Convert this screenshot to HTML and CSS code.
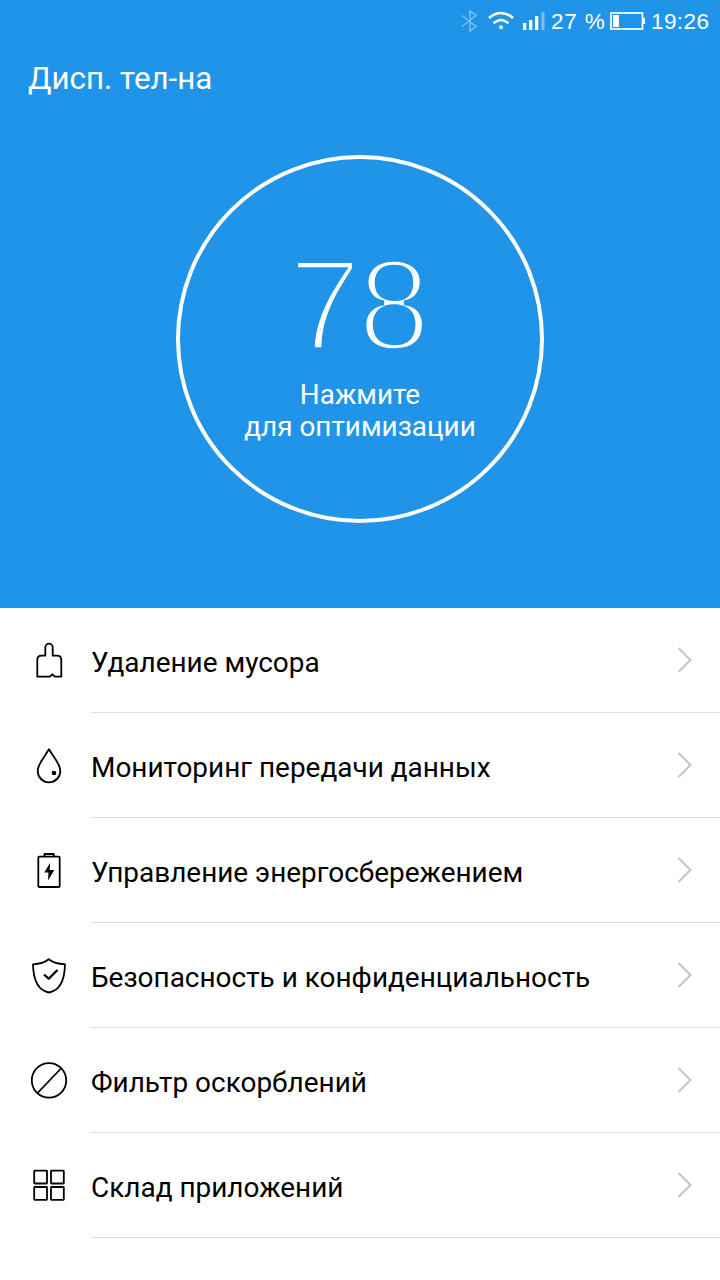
FILE: index.html
```html
<!DOCTYPE html>
<html lang="ru">
<head>
<meta charset="utf-8">
<title>Дисп. тел-на</title>
<link rel="stylesheet" href="styles.css">
</head>
<body>
<header class="hero">
  <div class="status">
    <svg class="status-icons" width="100" height="44" viewBox="0 0 100 44" fill="none">
      <path d="M12 15.500L26 26.500L20 31V11L26 15.500L12 26.500" stroke="#fff" stroke-opacity=".4" stroke-width="1.500"/>
      <g stroke="#fff" stroke-width="2.600"><path d="M39 18q12-10 24 0M43.500 23.200q7.500-6.400 15 0"/></g>
      <circle cx="51" cy="27.300" r="2" fill="#fff"/>
      <path d="M73 23h3.300v7h-3.300zM79 20h3.300v10h-3.300zM85 16h3.300v14h-3.300z" fill="#fff"/>
      <path d="M91.500 12h3v18h-3z" fill="#fff" fill-opacity=".4"/>
    </svg>
    <span class="charge">27 %</span>
    <svg class="battery" width="36" height="20" viewBox="0 0 36 20" fill="none">
      <rect x="1" y="1" width="31.500" height="16" stroke="#fff" stroke-width="1.700"/>
      <path d="M3 3h6v12H3zM33 6h2v6h-2z" fill="#fff"/>
    </svg>
    <span class="clock">19:26</span>
  </div>
  <h1 class="title">Дисп. тел-на</h1>
  <button class="dial">
    <span class="score">78</span>
    <span class="hint">Нажмите<br>для оптимизации</span>
  </button>
</header>
<main class="menu">
  <a class="row">
    <svg class="icon" viewBox="0 0 60 60"><path d="M17.300 46.700V30q0-4.300 4.300-4.300h3.700V17.400a3.700 3.700 0 0 1 7.400 0V25.700h4.300q4.300 0 4.300 4.300V46.700H35L32.300 44.300L29.800 46.700Z"/></svg>
    <span class="label"><span class="text">Удаление мусора</span><svg class="chevron" viewBox="0 0 16 26"><path d="M1.500 1L13.500 13L1.500 25"/></svg></span>
  </a>
  <a class="row">
    <svg class="icon" viewBox="0 0 60 60"><path d="M29 14.300C25 21 17.700 29 17.700 36a11.300 11.300 0 0 0 22.600 0C40.300 29 33 21 29 14.300Z"/><circle class="solid" cx="34" cy="38" r="2.300"/></svg>
    <span class="label"><span class="text">Мониторинг передачи данных</span><svg class="chevron" viewBox="0 0 16 26"><path d="M1.500 1L13.500 13L1.500 25"/></svg></span>
  </a>
  <a class="row">
    <svg class="icon" viewBox="0 0 60 60"><rect x="18.300" y="16.600" width="21.400" height="30.400" rx="1"/><path d="M24.500 16.500V14h9.300V16.500"/><path class="solid" d="M30 23L24.300 32.500H28.500L28 40.500L34.300 30H29.700Z"/></svg>
    <span class="label"><span class="text">Управление энергосбережением</span><svg class="chevron" viewBox="0 0 16 26"><path d="M1.500 1L13.500 13L1.500 25"/></svg></span>
  </a>
  <a class="row">
    <svg class="icon" viewBox="0 0 60 60"><path d="M28.700 14.300Q23 18.900 13 19.300C13.300 33 17.500 45.500 29 47.500C40.500 45.500 44.700 33 45 19.300Q34.500 18.900 28.700 14.300Z"/><path class="tick" d="M24 29.500L28.700 33.700L37.500 25"/></svg>
    <span class="label"><span class="text">Безопасность и конфиденциальность</span><svg class="chevron" viewBox="0 0 16 26"><path d="M1.500 1L13.500 13L1.500 25"/></svg></span>
  </a>
  <a class="row">
    <svg class="icon" viewBox="0 0 60 60"><circle cx="29" cy="30.400" r="17.200"/><path d="M17.500 43L41 18.500"/></svg>
    <span class="label"><span class="text">Фильтр оскорблений</span><svg class="chevron" viewBox="0 0 16 26"><path d="M1.500 1L13.500 13L1.500 25"/></svg></span>
  </a>
  <a class="row">
    <svg class="icon" viewBox="0 0 60 60"><rect x="14.200" y="15.700" width="12.800" height="12.800" rx=".5"/><rect x="31" y="15.700" width="12.800" height="12.800" rx=".5"/><rect x="14.200" y="32" width="12.800" height="12.800" rx=".5"/><rect x="31" y="32" width="12.800" height="12.800" rx=".5"/></svg>
    <span class="label"><span class="text">Склад приложений</span><svg class="chevron" viewBox="0 0 16 26"><path d="M1.500 1L13.500 13L1.500 25"/></svg></span>
  </a>
</main>
</body>
</html>
```
FILE: styles.css
```css
* { box-sizing: border-box; }
body {
  margin: 0;
  width: 720px;
  height: 1280px;
  overflow: hidden;
  background: #fff;
  color: #000;
  font-family: Roboto, "Noto Sans", sans-serif;
}
.hero {
  height: 608px;
  background: #1f94e9;
  color: #fff;
}
.status {
  display: flex;
  align-items: center;
  height: 44px;
  padding-left: 450px;
  font: 22.5px/44px "Liberation Sans", Arial, sans-serif;
  white-space: pre;
}
.charge {
  width: 60px;
  padding-left: 1px;
  letter-spacing: .8px;
}
.battery { flex: none; }
.status-icons { flex: none; }
.clock {
  padding-left: 5px;
  letter-spacing: .4px;
}
.title {
  margin: 15px 0 0 28px;
  height: 40px;
  font-size: 31.3px;
  font-weight: 400;
  line-height: 40px;
}
.dial {
  display: flex;
  flex-direction: column;
  justify-content: flex-start;
  align-items: center;
  width: 368px;
  height: 368px;
  margin: 56px auto 0;
  padding: 78px 0 0;
  border: 4px solid #fff;
  border-radius: 50%;
  background: none;
  color: inherit;
  font-family: inherit;
  text-align: center;
}
/* The background-coloured outline thins the numerals. */
.score {
  height: 142px;
  margin-left: -4px;
  font: 130px/136px "Liberation Sans", Arial, sans-serif;
  letter-spacing: -3px;
  -webkit-text-stroke: 5.4px #1f94e9;
}
.hint {
  font-size: 27.9px;
  line-height: 32px;
}
.row {
  display: flex;
  height: 105px;
}
.icon {
  flex: none;
  width: 60px;
  height: 60px;
  margin: 22px 11px 0 20px;
  fill: none;
  stroke: #000;
  stroke-width: 1.8;
  stroke-linejoin: round;
}
.icon .solid { fill: #000; stroke: none; }
.icon .tick { stroke-width: 2.3; }
.label {
  flex: 1;
  display: flex;
  align-items: center;
  justify-content: space-between;
  padding-right: 27px;
  border-bottom: 1px solid #dedede;
}
.text {
  padding-top: 5px;
  font-size: 27.95px;
  line-height: 32px;
  white-space: nowrap;
}
.chevron {
  width: 16px;
  height: 26px;
  fill: none;
  stroke: #c4c4c4;
  stroke-width: 2;
}
```
